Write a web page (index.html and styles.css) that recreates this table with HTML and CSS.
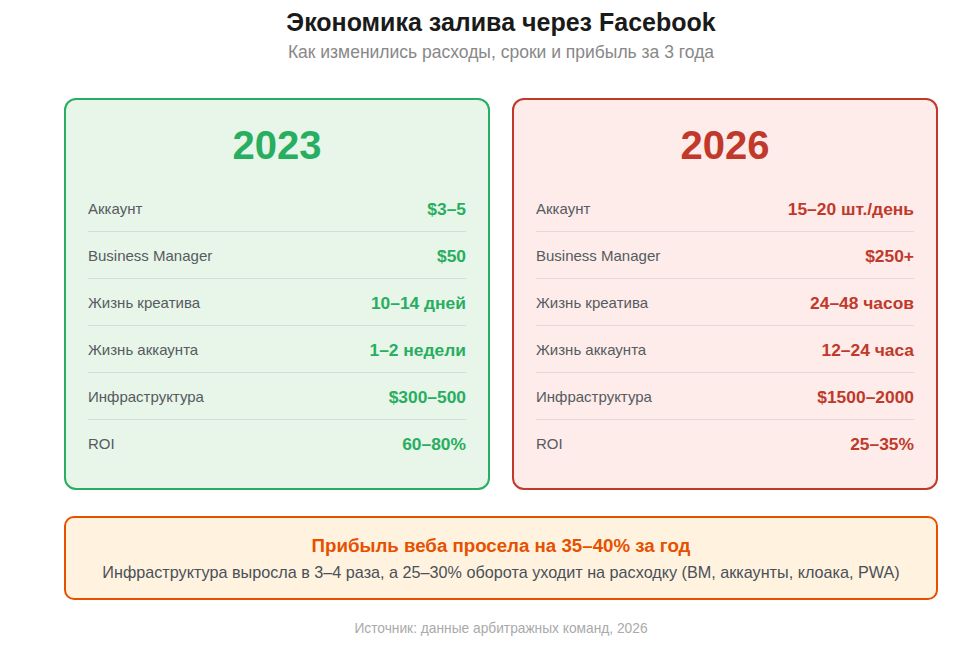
FILE: index.html
```html
<!DOCTYPE html>
<html lang="ru">
<head>
<meta charset="utf-8">
<link rel="stylesheet" href="styles.css">
</head>
<body>
<div class="page">
  <header class="head">
    <h1 class="title">Экономика залива через Facebook</h1>
    <p class="subtitle">Как изменились расходы, сроки и прибыль за 3 года</p>
  </header>
  <div class="cards">
    <section class="card card-old">
      <div class="year">2023</div>
      <div class="row"><span class="label">Аккаунт</span><span class="value">$3–5</span></div>
      <div class="row"><span class="label">Business Manager</span><span class="value">$50</span></div>
      <div class="row"><span class="label">Жизнь креатива</span><span class="value">10–14 дней</span></div>
      <div class="row"><span class="label">Жизнь аккаунта</span><span class="value">1–2 недели</span></div>
      <div class="row"><span class="label">Инфраструктура</span><span class="value">$300–500</span></div>
      <div class="row"><span class="label">ROI</span><span class="value">60–80%</span></div>
    </section>
    <section class="card card-new">
      <div class="year">2026</div>
      <div class="row"><span class="label">Аккаунт</span><span class="value">15–20 шт./день</span></div>
      <div class="row"><span class="label">Business Manager</span><span class="value">$250+</span></div>
      <div class="row"><span class="label">Жизнь креатива</span><span class="value">24–48 часов</span></div>
      <div class="row"><span class="label">Жизнь аккаунта</span><span class="value">12–24 часа</span></div>
      <div class="row"><span class="label">Инфраструктура</span><span class="value">$1500–2000</span></div>
      <div class="row"><span class="label">ROI</span><span class="value">25–35%</span></div>
    </section>
  </div>
  <div class="summary">
    <div class="summary-title">Прибыль веба просела на 35–40% за год</div>
    <div class="summary-text">Инфраструктура выросла в 3–4 раза, а 25–30% оборота уходит на расходку (BM, аккаунты, клоака, PWA)</div>
  </div>
  <p class="source">Источник: данные арбитражных команд, 2026</p>
</div>
</body>
</html>
```
FILE: styles.css
```css
* { box-sizing: border-box; }
html, body { margin: 0; padding: 0; background: #ffffff; }
body { font-family: "Liberation Sans", Arial, sans-serif; color: #222; }
.page { width: 874px; margin-left: 64px; padding-top: 7px; }
.head { text-align: center; }
.title { margin: 0; font-size: 25px; line-height: 30px; font-weight: 700; color: #1a1a1a; }
.subtitle { margin: 5px 0 0; font-size: 17.5px; line-height: 20px; color: #888; }
.cards { display: grid; grid-template-columns: 1fr 1fr; gap: 22px; margin-top: 36px; }
.card { border: 2px solid; border-radius: 12px; padding: 22px 22px 22px; }
.card-old { border-color: #27ae60; background: #e8f5e9; }
.card-new { border-color: #c0392b; background: #fdecea; }
.year { text-align: center; font-size: 40px; line-height: 46px; font-weight: 700; margin-bottom: 17px; }
.card-old .year, .card-old .value { color: #27ae60; }
.card-new .year, .card-new .value { color: #c0392b; }
.row { display: flex; justify-content: space-between; align-items: center; padding: 15px 0 13px; line-height: 18px; border-bottom: 1px solid #d5dcd8; }
.card-new .row { border-bottom-color: #e6d8d8; }
.row:last-child { border-bottom: none; }
.label { font-size: 15px; color: #555b60; }
.value { font-size: 17.4px; font-weight: 700; }
.summary { margin-top: 26px; border: 2px solid #e65100; border-radius: 10px; background: #fff3e0; padding: 16px 20px 15px; text-align: center; }
.summary-title { font-size: 18.7px; line-height: 24px; font-weight: 700; color: #e65100; }
.summary-text { margin-top: 3px; font-size: 16.2px; line-height: 22px; color: #4a5058; }
.source { margin: 21px 0 0; text-align: center; font-size: 13.75px; line-height: 16px; color: #aaa; }
```
